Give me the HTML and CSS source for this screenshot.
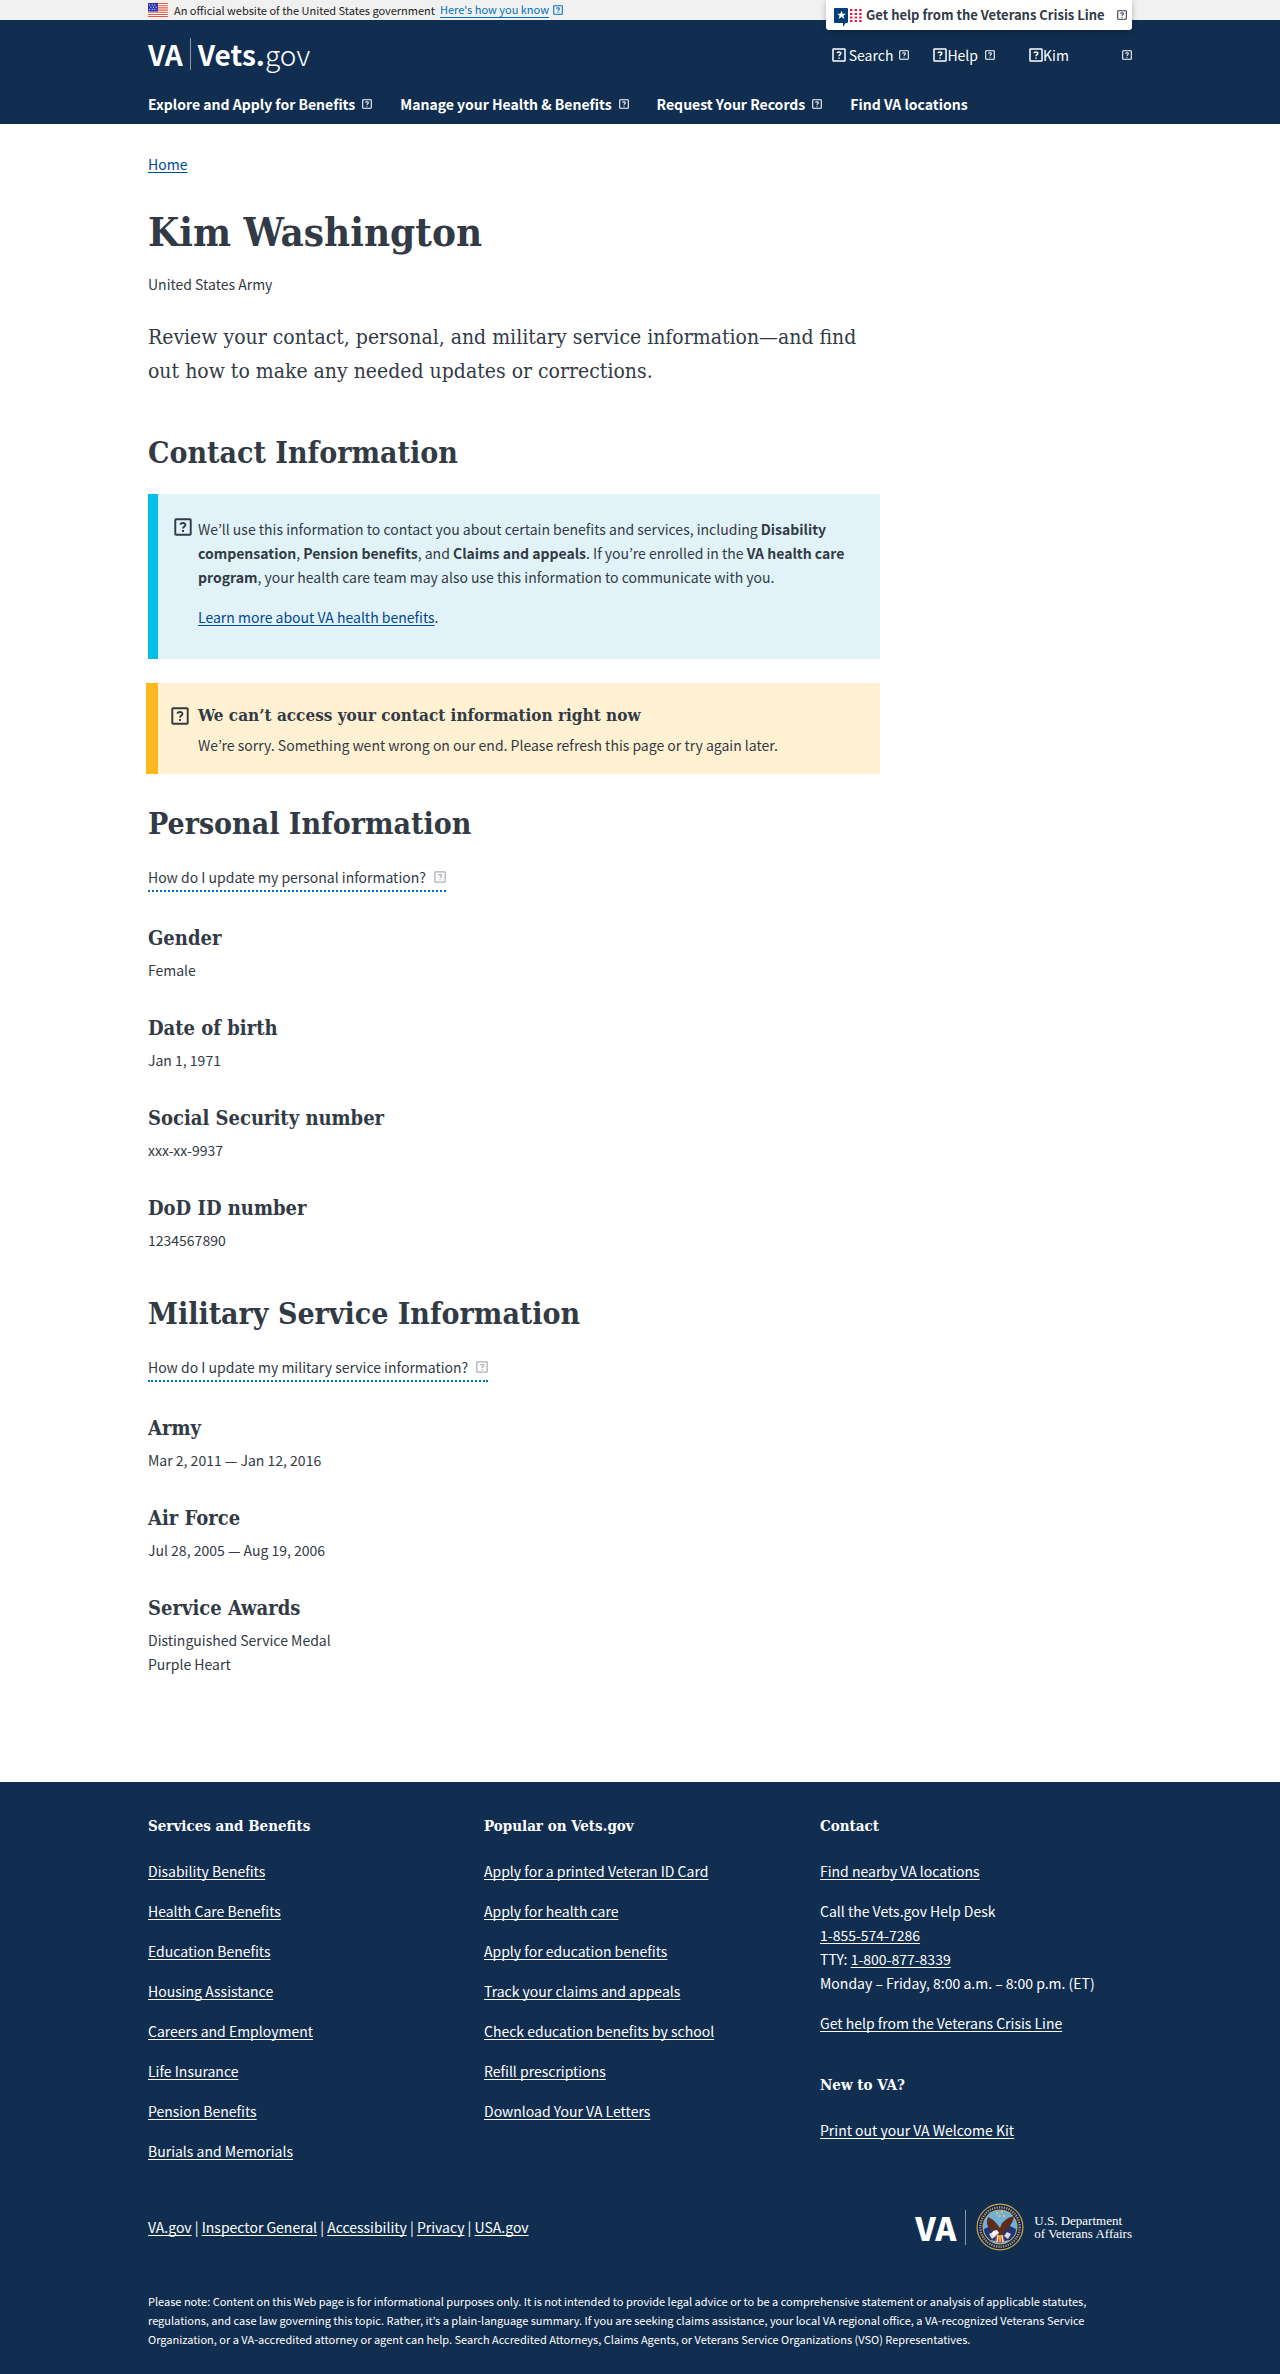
FILE: index.html
```html
<!DOCTYPE html>
<html lang="en">
<head>
<meta charset="utf-8">
<title>Profile: Vets.gov</title>
<meta name="viewport" content="width=device-width, initial-scale=1">
<link rel="stylesheet" href="styles.css">
</head>
<body>
<svg class="sprite" aria-hidden="true">
  <symbol id="box" viewBox="0 0 14 14">
    <rect x="1" y="1" width="12" height="12" rx="0.6" fill="none" stroke="currentColor" stroke-width="1.5"/>
    <path d="M5 5.2C5.2 3.6 8.9 3.4 8.9 5.3C8.9 6.6 7 6.6 7 8.2M7 9.4V10.8" fill="none" stroke="currentColor" stroke-width="1.5"/>
  </symbol>
</svg>

<div class="gov-banner">
  <div class="wrap gov-row">
    <svg class="flag" viewBox="0 0 20 14" aria-hidden="true">
      <path fill="#fff" d="M0 0h20v14H0z"/>
      <path stroke="#e9573f" stroke-width="1.1" d="M0 .5h20M0 2.7h20M0 4.9h20M0 7.1h20M0 9.3h20M0 11.5h20M0 13.5h20"/>
      <path fill="#2b35af" d="M0 0h10v8.500H0z"/>
      <path stroke="#fff" stroke-width="1" stroke-dasharray="1 1.600" d="M1.200 2h8M2.400 4.200h7M1.200 6.400h8"/>
    </svg>
    <span>An official website of the United States government</span>
    <button class="gov-more" type="button"><span>Here's how you know</span><svg class="icon-s"><use href="#box"/></svg></button>
  </div>
</div>

<header class="site-header">
  <div class="wrap header-inner">
    <button class="crisis" type="button">
      <svg class="crisis-icon" viewBox="0 0 28 19" aria-hidden="true">
        <path fill="#003e73" d="M1 0h12q1 0 1 1v13q0 1-1 1h-1.500l-2.500 4v-4H1q-1 0-1-1V1q0-1 1-1z"/>
        <path fill="#fff" d="M7.500 2.800l1.200 3h3.200L9.400 7.800l.9 3.200-2.800-1.900-2.800 1.900.9-3.200-2.500-2h3.200z"/>
        <path stroke="#e31c3d" stroke-width="2.200" stroke-dasharray="2.400 2.200" d="M16 2.200h12M16 6h12M16 9.500h12M16 13h12"/>
      </svg>
      <span>Get help from the Veterans Crisis Line</span>
      <svg class="icon-s"><use href="#box"/></svg>
    </button>
    <div class="brand-row">
      <a class="brand" href="#"><b class="brand-va">VA</b><b>Vets.</b><span>gov</span></a>
      <div class="tools">
        <button class="tool tool-search" type="button"><svg class="icon-m"><use href="#box"/></svg><span>Search</span><svg class="icon-s"><use href="#box"/></svg></button>
        <button class="tool tool-help" type="button"><svg class="icon-m"><use href="#box"/></svg><span>Help</span><svg class="icon-s"><use href="#box"/></svg></button>
        <button class="tool tool-user" type="button"><svg class="icon-m"><use href="#box"/></svg><span>Kim</span><svg class="icon-s"><use href="#box"/></svg></button>
      </div>
    </div>
    <nav class="main-nav">
      <button type="button">Explore and Apply for Benefits<svg class="icon-s"><use href="#box"/></svg></button>
      <button type="button">Manage your Health &amp; Benefits<svg class="icon-s"><use href="#box"/></svg></button>
      <button type="button">Request Your Records<svg class="icon-s"><use href="#box"/></svg></button>
      <a href="#">Find VA locations</a>
    </nav>
  </div>
</header>

<main class="wrap">
  <div class="content">
    <nav class="crumbs"><a href="#">Home</a></nav>
    <h1>Kim Washington</h1>
    <p class="branch">United States Army</p>
    <p class="lead">Review your contact, personal, and military service information—and find out how to make any needed updates or corrections.</p>

    <h2>Contact Information</h2>
    <section class="alert info">
      <svg class="icon-l"><use href="#box"/></svg>
      <div>
        <p>We’ll use this information to contact you about certain benefits and services, including <b>Disability compensation</b>, <b>Pension benefits</b>, and <b>Claims and appeals</b>. If you’re enrolled in the <b>VA health care program</b>, your health care team may also use this information to communicate with you.</p>
        <p class="more"><a href="#">Learn more about VA health benefits</a>.</p>
      </div>
    </section>
    <section class="alert warning">
      <svg class="icon-l"><use href="#box"/></svg>
      <div>
        <h4>We can’t access your contact information right now</h4>
        <p>We’re sorry. Something went wrong on our end. Please refresh this page or try again later.</p>
      </div>
    </section>

    <h2 class="after-alert">Personal Information</h2>
    <button class="expander" type="button">How do I update my personal information?<svg class="icon-x"><use href="#box"/></svg></button>
    <h3>Gender</h3>
    <p>Female</p>
    <h3>Date of birth</h3>
    <p>Jan 1, 1971</p>
    <h3>Social Security number</h3>
    <p>xxx-xx-9937</p>
    <h3>DoD ID number</h3>
    <p>1234567890</p>

    <h2>Military Service Information</h2>
    <button class="expander" type="button">How do I update my military service information?<svg class="icon-x"><use href="#box"/></svg></button>
    <h3>Army</h3>
    <p>Mar 2, 2011 — Jan 12, 2016</p>
    <h3>Air Force</h3>
    <p>Jul 28, 2005 — Aug 19, 2006</p>
    <h3>Service Awards</h3>
    <p>Distinguished Service Medal</p>
    <p>Purple Heart</p>
  </div>
</main>

<footer class="site-footer">
  <div class="wrap">
    <div class="columns">
      <section>
        <h4>Services and Benefits</h4>
        <ul>
          <li><a href="#">Disability Benefits</a></li>
          <li><a href="#">Health Care Benefits</a></li>
          <li><a href="#">Education Benefits</a></li>
          <li><a href="#">Housing Assistance</a></li>
          <li><a href="#">Careers and Employment</a></li>
          <li><a href="#">Life Insurance</a></li>
          <li><a href="#">Pension Benefits</a></li>
          <li><a href="#">Burials and Memorials</a></li>
        </ul>
      </section>
      <section>
        <h4>Popular on Vets.gov</h4>
        <ul>
          <li><a href="#">Apply for a printed Veteran ID Card</a></li>
          <li><a href="#">Apply for health care</a></li>
          <li><a href="#">Apply for education benefits</a></li>
          <li><a href="#">Track your claims and appeals</a></li>
          <li><a href="#">Check education benefits by school</a></li>
          <li><a href="#">Refill prescriptions</a></li>
          <li><a href="#">Download Your VA Letters</a></li>
        </ul>
      </section>
      <section>
        <h4>Contact</h4>
        <ul>
          <li><a href="#">Find nearby VA locations</a></li>
          <li>Call the Vets.gov Help Desk<br><a href="#">1-855-574-7286</a><br>TTY: <a href="#">1-800-877-8339</a><br>Monday – Friday, 8:00 a.m. – 8:00 p.m. (ET)</li>
          <li><a href="#">Get help from the Veterans Crisis Line</a></li>
        </ul>
        <h4 class="second">New to VA?</h4>
        <ul>
          <li><a href="#">Print out your VA Welcome Kit</a></li>
        </ul>
      </section>
    </div>
    <div class="legal-row">
      <p><a href="#">VA.gov</a> | <a href="#">Inspector General</a> | <a href="#">Accessibility</a> | <a href="#">Privacy</a> | <a href="#">USA.gov</a></p>
      <a class="dept" href="#">
        <b class="dept-va">VA</b>
        <svg class="seal" viewBox="0 0 48 48" aria-hidden="true">
          <circle cx="24" cy="24" r="23.500" fill="#c9a74e"/>
          <circle cx="24" cy="24" r="22.300" fill="#14234d"/>
          <circle cx="24" cy="24" r="19.700" fill="none" stroke="#a99c74" stroke-width="2.400" stroke-dasharray="1.300 1.100"/>
          <circle cx="24" cy="24" r="17.500" fill="#c9a74e"/>
          <circle cx="24" cy="24" r="16.700" fill="#6fb1dc"/>
          <path fill="#e7c34a" d="M20 9h2v2h-2zM25 8h2v2h-2zM22.500 12h2v2h-2zM27 12h2v2h-2z"/>
          <path fill="#26336e" d="M8 26l8-4 6 8-2 8-6-1q-6-5-6-11zM40 26l-8-4-6 8 2 8 6-1q6-5 6-11z"/>
          <path fill="#d9dbe6" d="M13 31l4-2 3 4-4 3zM35 31l-4-2-3 4 4 3z"/>
          <path fill="#5b2d1a" d="M12 14q-3 7 2 12l7 5 4 2 6-7q6-5 7-13l-6 2-6 5-2 5-3-4q-4-5-9-7z"/>
          <path fill="#fff" d="M17 28l4-1 2 3-4 3-3-2z"/>
          <path fill="#c33b3b" d="M20 32h7l2 6-5 2-5-2z"/>
          <path stroke="#fff" stroke-width="1.200" d="M22 32l-1 7M26 32l1 7"/>
          <path fill="#e0aa35" d="M22 32h4l-1 7h-2z"/>
        </svg>
        <span class="dept-name">U.S. Department<br>of Veterans Affairs</span>
      </a>
    </div>
    <p class="disclaimer">Please note: Content on this Web page is for informational purposes only. It is not intended to provide legal advice or to be a comprehensive statement or analysis of applicable statutes, regulations, and case law governing this topic. Rather, it’s a plain-language summary. If you are seeking claims assistance, your local VA regional office, a VA-recognized Veterans Service Organization, or a VA-accredited attorney or agent can help. Search Accredited Attorneys, Claims Agents, or Veterans Service Organizations (VSO) Representatives.</p>
  </div>
</footer>
</body>
</html>
```
FILE: styles.css
```css
:root {
  --sans: "Noto Sans CJK KR", "Open Sans", sans-serif;
  --slab: "DejaVu Serif Condensed", "DejaVu Serif", serif;
  --ink: #323a45;
  --navy: #112e51;
  --link: #004795;
}

* { box-sizing: border-box; }

body {
  margin: 0;
  font: 14px/24px var(--sans);
  color: var(--ink);
  background: #fff;
}

h1, h2, h3, h4, p, ul { margin: 0; padding: 0; }
ul { list-style: none; }

button {
  font: inherit;
  color: inherit;
  background: none;
  border: 0;
  padding: 0;
  cursor: pointer;
}

a {
  color: var(--link);
  text-underline-offset: 2px;
  text-decoration-thickness: 1px;
  text-decoration-skip-ink: none;
}

svg { display: block; flex: none; }
.sprite { position: absolute; width: 0; height: 0; }
.icon-s { width: 10px; height: 10px; }
.icon-x { width: 12px; height: 12px; }
.icon-m { width: 14px; height: 14px; }
.icon-l { width: 18px; height: 18px; }

.wrap {
  max-width: 1016px;
  margin: 0 auto;
  padding: 0 16px;
}

/* Government banner */
.gov-banner { background: #f1f1f1; color: #212121; }
.gov-row {
  display: flex;
  align-items: center;
  height: 20px;
  font-size: 11px;
  line-height: 20px;
}
.flag { width: 20px; height: 14px; margin-right: 6px; }
.gov-more {
  display: flex;
  align-items: center;
  gap: 4px;
  margin-left: 5px;
  color: #0071bc;
}
.gov-more span { line-height: 15px; border-bottom: 1px solid; }

/* Header */
.site-header { background: var(--navy); color: #fff; }
.header-inner { position: relative; padding-bottom: 8px; }
.crisis {
  position: absolute;
  top: -20px;
  right: 16px;
  display: flex;
  align-items: center;
  width: 306px;
  height: 30px;
  padding: 0 5px 0 8px;
  font-size: 13px;
  font-weight: 700;
  color: var(--ink);
  background: #fff;
  border-radius: 0 0 3px 3px;
  box-shadow: 0 2px 6px rgba(0, 0, 0, .25);
}
.crisis-icon { width: 28px; height: 19px; margin: 4px 4px 0 0; }
.crisis .icon-s { margin-left: auto; }
.brand-row {
  display: flex;
  justify-content: space-between;
  align-items: center;
  padding: 18px 0 2px;
}
.brand {
  display: flex;
  font-size: 28px;
  line-height: 32px;
  color: #fff;
  text-decoration: none;
}
.brand span { font-weight: 300; }
.brand-va {
  padding-right: 7px;
  margin-right: 7px;
  border-right: 1px solid #8797a9;
}
.tools { display: flex; padding-top: 1px; }
.tool { display: flex; align-items: center; }
.tool-search { gap: 6px; margin-right: 24px; }
.tool-search span { margin-left: -3px; }
.tool-help { margin-right: 34px; }
.tool-help .icon-s { margin-left: 7px; }
.tool-user { width: 103px; }
.tool-user .icon-s { margin-left: auto; }
.main-nav {
  display: flex;
  gap: 28px;
  padding-top: 20px;
  font-weight: 700;
}
.main-nav button { display: flex; align-items: center; gap: 7px; font-weight: 700; }
.main-nav a { color: #fff; text-decoration: none; }

/* Profile */
.content { width: 75%; max-width: 732px; padding: 28px 0 106px; }
h1, h2, h3, h4 { font-family: var(--slab); font-weight: 700; }
h1 { margin: 30px 0 14px; font-size: 40px; line-height: 52px; }
h2 { margin: 42px 0 21px; font-size: 30px; line-height: 40px; }
h3 { margin: 33px 0 7px; font-size: 20px; line-height: 26px; }
.lead {
  margin: 24px 0 45px;
  font-family: var(--slab);
  font-size: 21px;
  line-height: 34px;
}
.alert {
  display: grid;
  grid-template-columns: 18px 1fr;
  column-gap: 6px;
  padding: 23px 20px 30px 16px;
  background: #e1f3f8;
  border-left: 10px solid #02bfe7;
}
.alert .icon-l { margin-top: 1px; }
.more { margin-top: 16px; }
.warning {
  column-gap: 9px;
  margin: 24px 0 0 -2px;
  padding: 20px 20px 17px 13px;
  background: #fff1d2;
  border-left: 12px solid #fdb81e;
}
.warning .icon-l { margin-top: 4px; }
.alert h4 { margin-bottom: 6px; font-size: 17px; line-height: 24px; }
h2.after-alert { margin-top: 30px; }
.expander {
  display: flex;
  align-items: center;
  gap: 8px;
  border-bottom: 2px dotted #0071bc;
  padding-bottom: 1px;
}
.expander .icon-x { color: #aeb0b5; }

/* Footer */
.site-footer { padding: 32px 0 25px; background: var(--navy); color: #fff; }
.site-footer a { color: #fff; }
.site-footer h4 { margin-bottom: 21px; font-size: 15px; line-height: 24px; }
.site-footer .second { margin-top: 38px; }
.columns { display: grid; grid-template-columns: repeat(3, 1fr); column-gap: 24px; }
.site-footer li + li { margin-top: 16px; }
.legal-row {
  display: flex;
  justify-content: space-between;
  align-items: center;
  margin: 40px 0 41px;
}
.site-footer .dept { display: flex; align-items: center; text-decoration: none; }
.dept-va {
  padding-right: 9px;
  margin-right: 10px;
  border-right: 1px solid #8797a9;
  font-size: 32px;
  font-weight: 900;
  line-height: 35px;
}
.seal { width: 48px; height: 48px; margin-right: 10px; }
.dept-name { font: 13px/13px "Liberation Serif", serif; }
.disclaimer { font-size: 11px; line-height: 19px; }
```
